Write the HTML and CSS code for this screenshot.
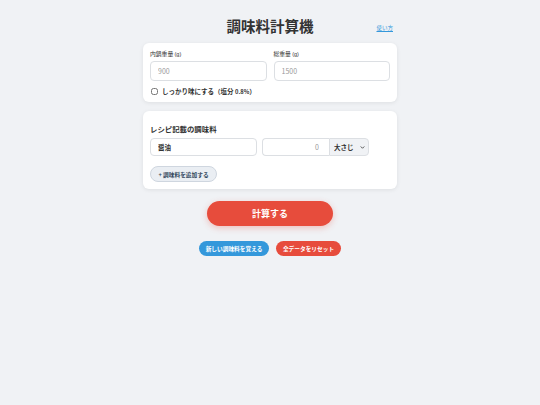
FILE: index.html
```html
<!DOCTYPE html>
<html lang="ja">
<head>
<meta charset="utf-8">
<title>調味料計算機</title>
<link rel="stylesheet" href="styles.css">
</head>
<body>
<div class="app">
  <header class="header">
    <span></span>
    <h1 class="title">調味料計算機</h1>
    <a class="help" href="#">使い方</a>
  </header>

  <section class="card card-weights">
    <div class="fields">
      <label class="field">
        <span class="label">内鍋重量 <small>(g)</small></span>
        <input class="input" type="text" placeholder="900">
      </label>
      <label class="field">
        <span class="label">総重量 <small>(g)</small></span>
        <input class="input" type="text" placeholder="1500">
      </label>
    </div>
    <label class="check">
      <input type="checkbox" class="checkbox">
      <span>しっかり味にする（塩分 <span class="num">0.8%</span>）</span>
    </label>
  </section>

  <section class="card card-recipe">
    <h2 class="section-title">レシピ記載の調味料</h2>
    <div class="row">
      <input class="input name" type="text" value="醤油">
      <div class="amount">
        <input class="input qty" type="text" placeholder="0">
        <div class="unit-wrap">
          <select class="unit"><option>大さじ</option></select>
          <svg class="chev" viewBox="0 0 10 10" width="5" height="5"><path d="M2 3.5 L5 6.5 L8 3.5" fill="none" stroke="#333" stroke-width="1.6" stroke-linecap="round" stroke-linejoin="round"/></svg>
        </div>
      </div>
    </div>
    <button class="add-btn">+ 調味料を追加する</button>
  </section>

  <div class="calc-wrap">
    <button class="calc-btn">計算する</button>
  </div>

  <div class="sub-actions">
    <button class="pill blue">新しい調味料を覚える</button>
    <button class="pill red">全データをリセット</button>
  </div>
</div>
</body>
</html>
```

FILE: styles.css
```css
* { box-sizing: border-box; }

html, body {
  margin: 0;
  padding: 0;
  background: #f0f2f5;
  font-family: "Noto Sans CJK JP", "Noto Sans", "Liberation Sans", sans-serif;
  color: #333;
}

.app {
  width: 254px;
  margin: 0 auto;
  padding-top: 15px;
}

.header {
  display: grid;
  grid-template-columns: 1fr auto 1fr;
  align-items: center;
  height: 22px;
  margin-bottom: 6px;
}

.title {
  margin: 0;
  font-size: 14.5px;
  font-weight: 700;
  color: #333;
  line-height: 22px;
}

.help {
  justify-self: end;
  margin-right: 4px;
  margin-top: 3px;
  font-size: 5.5px;
  color: #3498db;
  text-decoration: underline;
}

.card {
  background: #fff;
  border-radius: 6px;
  box-shadow: 0 1px 4px rgba(0, 0, 0, 0.08);
  padding: 7px;
}

.card-weights {
  height: 59px;
  padding-top: 7px;
}

.fields {
  display: grid;
  grid-template-columns: 1fr 1fr;
  gap: 7px;
}

.field {
  display: flex;
  flex-direction: column;
}

.label {
  font-size: 5.8px;
  line-height: 7px;
  color: #333;
  margin-bottom: 3px;
}

.label small {
  font-size: 5.5px;
  font-family: "Liberation Sans", sans-serif;
}

.input {
  display: block;
  height: 20px;
  border: 1px solid #dcdfe3;
  border-radius: 4px;
  padding: 0 7px;
  font-family: inherit;
  font-size: 7px;
  color: #333;
  background: #fff;
  outline: none;
}

.input::placeholder {
  color: #999;
}

.check {
  display: flex;
  align-items: center;
  gap: 4px;
  margin-top: 6px;
  margin-left: 1px;
  font-size: 6.5px;
  font-weight: 700;
  color: #333;
  line-height: 8px;
}

.check .num {
  font-size: 5.8px;
}

.checkbox {
  width: 7px;
  height: 7px;
  margin: 0;
}

.card-recipe {
  margin-top: 9px;
  height: 78px;
  padding-top: 13px;
}

.section-title {
  margin: 0 0 4px;
  font-size: 7.4px;
  font-weight: 600;
  line-height: 10px;
  color: #333;
}

.row {
  display: flex;
  gap: 5px;
  height: 18px;
}

.input.name {
  width: 107px;
  height: 18px;
  font-weight: 700;
  font-size: 6.5px;
}

.amount {
  display: flex;
  height: 18px;
}

.input.qty {
  width: 67px;
  height: 18px;
  border-radius: 4px 0 0 4px;
  border-right: none;
  text-align: right;
  padding-right: 10px;
}

.unit-wrap {
  position: relative;
  width: 40px;
  height: 18px;
}

.unit {
  display: block;
  appearance: none;
  -webkit-appearance: none;
  width: 40px;
  height: 18px;
  margin: 0;
  border: 1px solid #dcdfe3;
  border-radius: 0 4px 4px 0;
  background: #f0f2f5;
  font-family: inherit;
  font-size: 6.5px;
  font-weight: 700;
  color: #333;
  padding: 0 4px;
  outline: none;
}

.chev {
  position: absolute;
  right: 4px;
  top: 7px;
}

.add-btn {
  display: block;
  margin-top: 10px;
  width: 67px;
  height: 16px;
  border: 1px solid #cfd6df;
  border-radius: 8px;
  background: #eaeef3;
  font-family: inherit;
  font-size: 5.7px;
  font-weight: 700;
  color: #34495e;
  padding: 0;
}

.calc-wrap {
  display: flex;
  justify-content: center;
  margin-top: 12px;
}

.calc-btn {
  width: 126px;
  height: 25px;
  border: none;
  border-radius: 13px;
  background: #e74c3c;
  color: #fff;
  font-family: inherit;
  font-size: 9px;
  font-weight: 700;
  box-shadow: 0 2px 6px rgba(231, 76, 60, 0.3);
}

.sub-actions {
  display: flex;
  justify-content: center;
  gap: 7px;
  margin-top: 15px;
}

.pill {
  height: 15px;
  border: none;
  border-radius: 8px;
  color: #fff;
  font-family: inherit;
  font-size: 5.7px;
  font-weight: 700;
  padding: 0;
}

.pill.blue {
  width: 70px;
  background: #3498db;
}

.pill.red {
  width: 65px;
  background: #e74c3c;
}
```
